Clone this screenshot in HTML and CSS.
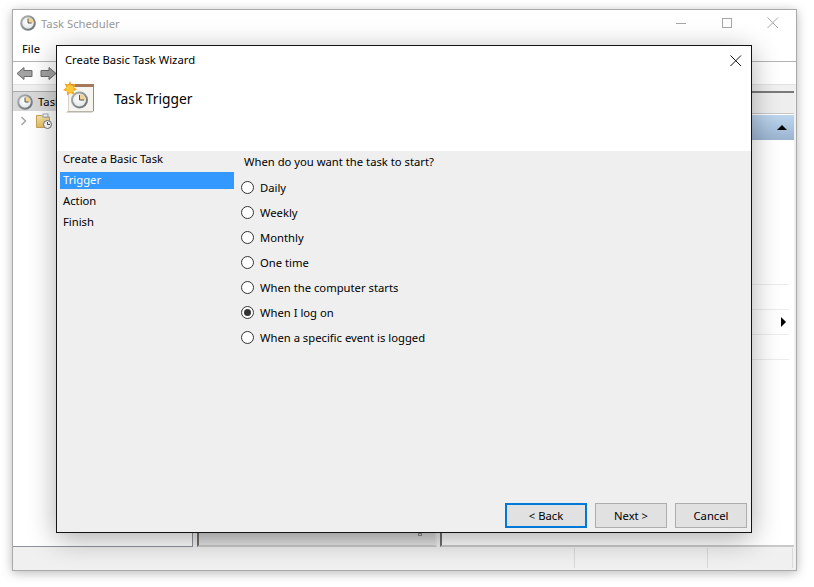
FILE: index.html
```html
<!DOCTYPE html>
<html lang="en">
<head>
<meta charset="utf-8">
<title>Task Scheduler</title>
<link rel="stylesheet" href="styles.css">
</head>
<body>
<svg class="defs" width="0" height="0" aria-hidden="true">
  <defs>
    <radialGradient id="face" cx="0.45" cy="0.4" r="0.7"><stop offset="0" stop-color="#fff"/><stop offset="1" stop-color="#dfe3e6"/></radialGradient>
    <linearGradient id="ring" x1="0" y1="0" x2="1" y2="1"><stop offset="0" stop-color="#b4b9bd"/><stop offset="1" stop-color="#63686c"/></linearGradient>
    <linearGradient id="folder" x1="0" y1="0" x2="0" y2="1"><stop offset="0" stop-color="#f8e6a8"/><stop offset="1" stop-color="#e3bd62"/></linearGradient>
    <symbol id="clock" viewBox="0 0 16 16">
      <circle cx="8" cy="8" r="7.8" fill="url(#ring)"/>
      <circle cx="8" cy="8" r="5.8" fill="url(#face)"/>
      <path d="M8 8V2.4A5.6 5.6 0 0 1 13.6 8Z" fill="#f1d493"/>
      <path d="M8 3.6V8H11.6" fill="none" stroke="#555" stroke-width="1"/>
    </symbol>
  </defs>
</svg>

<div class="window">
  <header class="titlebar">
    <svg class="ico16"><use href="#clock"/></svg>
    <span class="title-text">Task Scheduler</span>
    <div class="caption">
      <svg width="16" height="16" viewBox="0 0 16 16"><path d="M3 8.5H13" stroke="#a6a6a6"/></svg>
      <svg width="16" height="16" viewBox="0 0 16 16"><rect x="3.5" y="3.5" width="9" height="9" fill="none" stroke="#a6a6a6"/></svg>
      <svg width="16" height="16" viewBox="0 0 16 16"><path d="M2.500 2.500L13 13M13 2.500L2.500 13" stroke="#a6a6a6" fill="none"/></svg>
    </div>
  </header>
  <nav class="menubar"><span>File</span></nav>
  <div class="toolbar">
    <svg width="17" height="15" viewBox="0 0 17 15"><path d="M1 7.500L8 1.500V4.500H16V10.500H8V13.500Z" fill="#a3a3a3" stroke="#6b6b6b"/></svg>
    <svg width="17" height="15" viewBox="0 0 17 15"><path d="M16 7.500L9 1.500V4.500H1V10.500H9V13.500Z" fill="#a3a3a3" stroke="#6b6b6b"/></svg>
  </div>
  <div class="panes">
    <aside class="tree">
      <div class="tree-row selected">
        <svg class="ico16"><use href="#clock"/></svg>
        <span>Task Scheduler (Local)</span>
      </div>
      <div class="tree-row child">
        <svg class="chev" width="8" height="10" viewBox="0 0 8 10"><path d="M1.500 1L5.500 5L1.500 9" fill="none" stroke="#a6a6a6" stroke-width="1.500"/></svg>
        <svg class="ico16" viewBox="0 0 16 16">
          <path d="M.5 2.500H6L7.500 4H13.500V14.500H.5Z" fill="url(#folder)" stroke="#c9a352"/>
          <rect x="7" y="1" width="5" height="3" fill="#fff" stroke="#9ab"/>
          <circle cx="11.500" cy="11.500" r="4" fill="#fff" stroke="#6f7478"/>
          <path d="M11.500 9V11.500H14" fill="none" stroke="#555"/>
        </svg>
      </div>
    </aside>
    <main class="center"><div class="center-bottom"><span class="grip"></span></div></main>
    <aside class="actions">
      <div class="actions-head"></div>
      <div class="actions-band"><span class="tri-up"></span></div>
      <ul class="action-list">
        <li></li>
        <li><span class="tri-right"></span></li>
        <li></li>
        <li></li>
      </ul>
    </aside>
  </div>
  <footer class="statusbar">
    <span class="cell grow"></span>
    <span class="cell mid"></span>
    <span class="cell last"></span>
  </footer>
</div>

<section class="dialog" aria-label="Create Basic Task Wizard">
  <div class="dialog-top">
    <div class="dialog-title">
      <span>Create Basic Task Wizard</span>
      <svg class="dialog-close" width="13" height="13" viewBox="0 0 13 13"><path d="M1.500 1.500L12 12M12 1.500L1.500 12" stroke="#111" fill="none"/></svg>
    </div>
    <div class="dialog-head">
      <svg class="wizard-ico" width="32" height="32" viewBox="0 0 32 32">
        <path d="M5 3H31V30H5Z" fill="#f6f4ee"/>
        <path d="M5 30L3 31.500H29L31 30Z" fill="#b9b4a6"/>
        <path d="M5 3H31V6H5Z" fill="#a57a5c"/>
        <path d="M30 6H31V30H30Z" fill="#8c8c8c"/>
        <path d="M5 6H6V30H5Z" fill="#d5d2c8"/>
        <circle cx="16.500" cy="19" r="8.500" fill="url(#ring)"/>
        <circle cx="16.500" cy="19" r="6.500" fill="url(#face)"/>
        <path d="M16.500 19V13A6 6 0 0 1 22.500 19Z" fill="#f1d493"/>
        <path d="M16.500 14V19H21" fill="none" stroke="#555"/>
        <path d="M7 0L8.500 4L13 2.500L11 6.500L14 8.500L10.500 10L11.500 14L7.500 12L4 14.500L4 10.500L0 9L3.500 6.500L1.500 2.500L5.500 3.500Z" fill="#f3a51d"/>
        <circle cx="7" cy="8" r="3.800" fill="#fbc93a"/>
      </svg>
      <h1>Task Trigger</h1>
    </div>
  </div>
  <div class="dialog-body">
    <ol class="steps">
      <li>Create a Basic Task</li>
      <li class="current">Trigger</li>
      <li>Action</li>
      <li>Finish</li>
    </ol>
    <form class="options">
      <p>When do you want the task to start?</p>
      <label class="opt"><span class="radio"></span>Daily</label>
      <label class="opt"><span class="radio"></span>Weekly</label>
      <label class="opt"><span class="radio"></span>Monthly</label>
      <label class="opt"><span class="radio"></span>One time</label>
      <label class="opt"><span class="radio"></span>When the computer starts</label>
      <label class="opt"><span class="radio on"></span>When I log on</label>
      <label class="opt"><span class="radio"></span>When a specific event is logged</label>
    </form>
  </div>
  <div class="buttons">
    <span class="btn primary">&lt; Back</span>
    <span class="btn">Next &gt;</span>
    <span class="btn">Cancel</span>
  </div>
</section>
</body>
</html>
```
FILE: styles.css
```css
* { box-sizing: border-box; }
html, body { margin: 0; height: 100%; }
body {
  background: #fff;
  font-family: "Noto Sans", "Open Sans", sans-serif;
  font-size: 11.25px;
  color: #000;
  overflow: hidden;
}
.defs { position: absolute; }
.ico16 { width: 16px; height: 16px; flex: none; display: block; }

.window {
  position: absolute;
  left: 12px;
  top: 9px;
  width: 785px;
  height: 562px;
  border: 1px solid #a9a9a9;
  background: #fff;
  box-shadow: 0 2px 10px rgba(0,0,0,.28);
  display: flex;
  flex-direction: column;
}
.titlebar {
  height: 26px;
  padding: 0 15px 0 7px;
  display: flex;
  align-items: center;
  gap: 5px;
  color: #999;
}
.caption { margin-left: auto; display: flex; gap: 30px; }
.menubar {
  height: 26px;
  padding: 0 0 0 9px;
  display: flex;
  align-items: center;
  border-bottom: 1px solid #b4b4b4;
}
.toolbar {
  height: 23px;
  padding-left: 3px;
  display: flex;
  align-items: center;
  gap: 7px;
  border-bottom: 1px solid #e3e3e3;
}
.panes {
  flex: 1;
  min-height: 0;
  background: #f0f0f0;
  padding-top: 6px;
  display: grid;
  grid-template-columns: 180px 1fr 356px;
}
.tree {
  background: #fff;
  border: 1px solid #8d9299;
  border-top-color: #a9a9a9;
  border-left: 0;
}
.tree-row { height: 19px; display: flex; align-items: center; gap: 5px; padding-left: 4px; white-space: nowrap; overflow: hidden; }
.tree-row.selected { background: #d9d9d9; }
.tree-row.child { padding-left: 7px; gap: 8px; }
.chev { flex: none; }
.center {
  margin: 0 3px 0 4px;
  display: flex;
  flex-direction: column;
  justify-content: flex-end;
}
.center-bottom {
  height: 14px;
  border-left: 2px solid #6e6e6e;
  border-right: 2px solid #e6e6e6;
  border-bottom: 2px solid #c9c9c9;
  background: linear-gradient(#d6d6d6, #e6e6e6);
  position: relative;
}
.grip { position: absolute; right: 13px; top: 0; width: 4px; height: 3px; border: 1px solid #8a8a8a; }
.actions {
  margin-right: 2px;
  background: #fff;
  border-top: 2px solid #7a7a7a;
  border-left: 2px solid #6e6e6e;
  border-bottom: 2px solid #c9c9c9;
  display: flex;
  flex-direction: column;
}
.actions-head { height: 21px; background: #eeeeee; border-bottom: 1px solid #c6c6c6; }
.actions-band {
  height: 25px;
  margin-top: 1px;
  background: linear-gradient(#bdd6ee, #9bb3d0);
  display: flex;
  align-items: center;
  justify-content: flex-end;
  padding-right: 7px;
}
.tri-up { width: 0; height: 0; border: 5px solid transparent; border-top: 0; border-bottom: 5px solid #000; }
.action-list { list-style: none; margin: 144px 5px 0 0; padding: 0; }
.action-list li {
  height: 25px;
  border-top: 1px solid #ececec;
  display: flex;
  align-items: center;
  justify-content: flex-end;
  padding-right: 3px;
}
.tri-right { width: 0; height: 0; border: 5px solid transparent; border-right: 0; border-left: 5px solid #000; }
.statusbar {
  height: 23px;
  background: #f0f0f0;
  display: flex;
}
.cell { border-right: 1px solid #d9d9d9; height: 20px; margin-top: 1px; }
.cell.grow { flex: 1; }
.cell.mid { width: 133px; }
.cell.last { width: 85px; margin-right: 3px; }

.dialog {
  position: absolute;
  left: 56px;
  top: 45px;
  width: 696px;
  height: 488px;
  border: 1px solid #141414;
  background: #efefef;
  box-shadow: 0 6px 26px rgba(0,0,0,.32);
  display: flex;
  flex-direction: column;
}
.dialog-top { background: #fff; height: 105px; flex: none; }
.dialog-title {
  height: 27px;
  padding: 0 9px 0 8px;
  display: flex;
  align-items: center;
  justify-content: space-between;
}
.dialog-close { margin-top: 1px; }
.dialog-head { display: flex; align-items: center; padding: 0 0 0 6px; height: 36px; gap: 19px; margin-top: 6px; }
.wizard-ico { flex: none; }
.dialog-head h1 { margin: 2px 0 0; font-size: 13.8px; font-weight: 400; }
.dialog-body { flex: 1; min-height: 0; display: flex; }
.steps { list-style: none; margin: 0 0 0 3px; padding: 0; width: 174px; display: flex; flex-direction: column; gap: 4px; }
.steps li { height: 17px; padding: 0 0 2px 3px; display: flex; align-items: center; }
.steps li.current { background: #3399ff; color: #fff; }
.options { margin-left: 7px; display: flex; flex-direction: column; }
.options p { margin: 0 0 4px 3px; height: 20px; display: flex; align-items: center; }
.opt { height: 25px; display: flex; align-items: center; gap: 6px; }
.radio {
  width: 13px;
  height: 13px;
  border: 1px solid #333;
  border-radius: 50%;
  background: #fff;
  display: block;
  flex: none;
  position: relative;
}
.radio.on::after {
  content: "";
  position: absolute;
  left: 2px;
  top: 2px;
  width: 7px;
  height: 7px;
  border-radius: 50%;
  background: #333;
}
.buttons { flex: none; display: flex; justify-content: flex-end; gap: 8px; padding: 0 4px 4px 0; }
.btn {
  width: 72px;
  height: 25px;
  background: #e1e1e1;
  border: 1px solid #adadad;
  display: flex;
  align-items: center;
  justify-content: center;
}
.btn.primary { width: 82px; border: 2px solid #0078d7; }
```
